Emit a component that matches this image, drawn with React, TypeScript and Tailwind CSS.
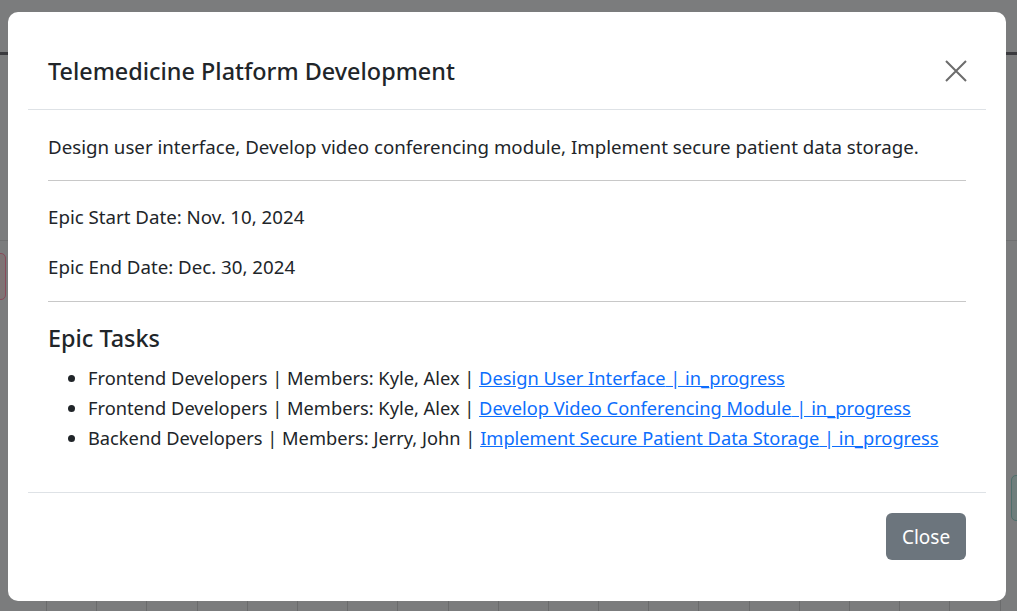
import React from 'react';

const FONT = "font-['Noto_Sans',sans-serif]";

const tasks = [
    { team: 'Frontend Developers', members: 'Kyle, Alex', task: 'Design User Interface' },
    { team: 'Frontend Developers', members: 'Kyle, Alex', task: 'Develop Video Conferencing Module' },
    { team: 'Backend Developers', members: 'Jerry, John', task: 'Implement Secure Patient Data Storage' },
];

function Backdrop() {
    // dimmed page that sits behind the modal
    const cols = Array.from({ length: 20 }, (_, i) => i);
    return (
        <div className="absolute inset-0">
            <div className="absolute left-0 top-[52px] w-full h-[3px] bg-[#3a3a3e]" />
            <div className="absolute left-0 top-[240px] w-full h-px bg-[#6f7071]" />
            <div className="absolute left-[-6px] top-[253px] w-[12px] h-[47px] rounded-[5px] border border-[#8a4a5a] bg-[#7e7475]" />
            <div className="absolute right-[-6px] top-[475px] w-[12px] h-[46px] rounded-[5px] border border-[#4e6f6c] bg-[#6f7e7c]" />
            <div className="absolute left-0 top-[600px] w-full flex">
                {cols.map((i) => (
                    <div key={i} className="w-[50.2px] h-[11px] border-r border-[#6a6b6c] shrink-0 first:w-[47px]" />
                ))}
            </div>
        </div>
    );
}

export default function App() {
    return (
        <div className={`relative w-[1017px] h-[611px] overflow-hidden bg-[#7b7c7d] text-[#212529] ${FONT}`}>
            <Backdrop />
            <div className="relative ml-[8px] mt-[12px] w-[998px] h-[589px] bg-white rounded-[10px] p-5 flex flex-col">
                <div className="h-[78px] shrink-0 border-b border-[#dee2e6] pl-5 pr-[19px] flex items-center justify-between">
                    <h4 className="text-[23.4px] leading-[30px] font-medium">Telemedicine Platform Development</h4>
                    <button className="w-[22px] h-[22px] flex items-center justify-center text-[#6c6c6c]">
                        <svg width="22" height="22" viewBox="0 0 22 22" fill="none" stroke="currentColor" strokeWidth="2">
                            <path d="M1 1L21 21M21 1L1 21" />
                        </svg>
                    </button>
                </div>

                <div className="flex-1 px-5 pt-[25px] text-[18.7px] leading-[24px]">
                    <p>Design user interface, Develop video conferencing module, Implement secure patient data storage.</p>
                    <hr className="mt-[21px] border-t border-[#c8c8c8]" />
                    <p className="mt-[24px]">Epic Start Date: Nov. 10, 2024</p>
                    <p className="mt-[26px]">Epic End Date: Dec. 30, 2024</p>
                    <hr className="mt-[22px] border-t border-[#c8c8c8]" />
                    <h4 className="mt-[21px] text-[23.4px] leading-[30px] font-medium">Epic Tasks</h4>
                    <ul className="mt-[10px] pl-[40px] list-disc text-[18.25px] leading-[30px]">
                        {tasks.map((t, i) => (
                            <li key={i}>
                                {t.team} | Members: {t.members} |{' '}
                                <a href="#" className="text-[#0d6efd] underline">
                                    {t.task} | in_progress
                                </a>
                            </li>
                        ))}
                    </ul>
                </div>

                <div className="h-[89px] shrink-0 border-t border-[#dee2e6] px-5 pt-[20px] flex items-start justify-end">
                    <button className="w-[80px] h-[47px] rounded-[6px] bg-[#6c757d] text-white text-[19px] pt-[2px]">Close</button>
                </div>
            </div>
        </div>
    );
}
